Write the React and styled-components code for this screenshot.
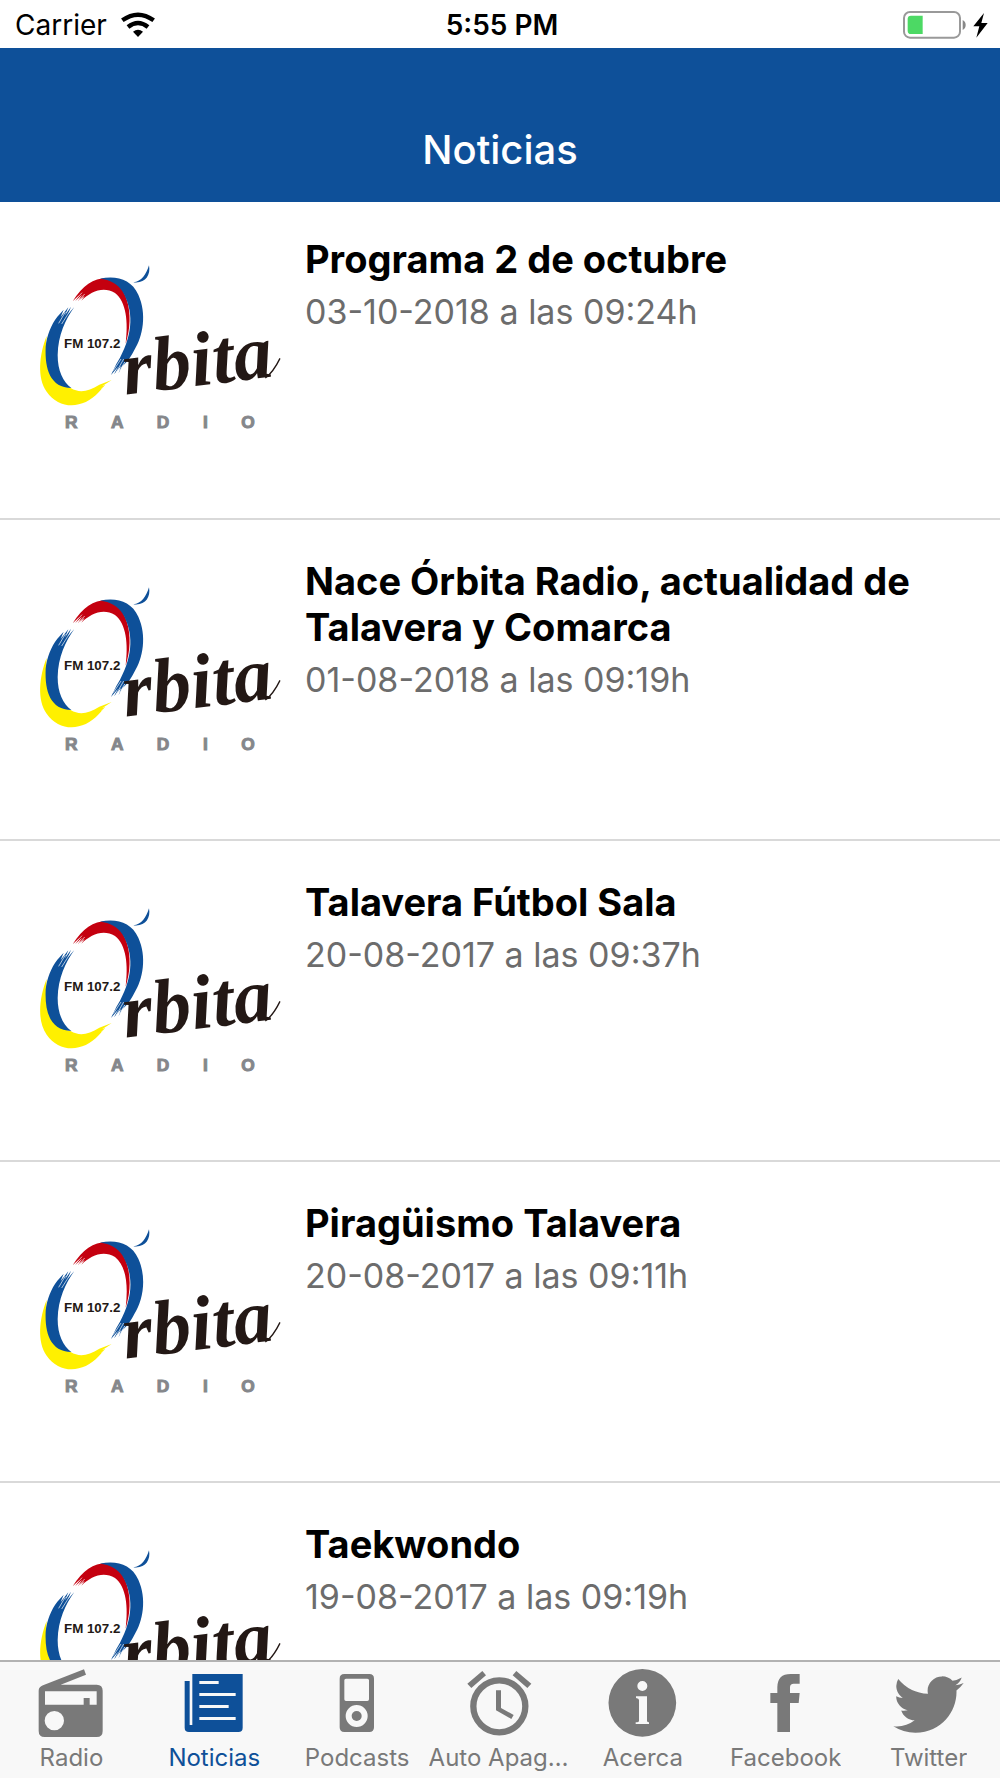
import React from 'react'
import styled, { createGlobalStyle } from 'styled-components'
import { IoLogoTwitter } from 'react-icons/io5'

const news = [
  { id: 1, title: 'Programa 2 de octubre', date: '03-10-2018 a las 09:24h' },
  { id: 2, title: 'Nace Órbita Radio, actualidad de Talavera y Comarca', date: '01-08-2018 a las 09:19h' },
  { id: 3, title: 'Talavera Fútbol Sala', date: '20-08-2017 a las 09:37h' },
  { id: 4, title: 'Piragüismo Talavera', date: '20-08-2017 a las 09:11h' },
  { id: 5, title: 'Taekwondo', date: '19-08-2017 a las 09:19h' },
]

const RadioIcon = () => (
  <TabSvg viewBox="0 0 216 216">
    <path fillRule="evenodd" d="M24 52 147 4 153 20 77 50H185Q203 50 203 68V189Q203 207 185 207H29Q11 207 11 189V68Q11 57 24 52ZM30 70V110H146V90H164V110H185V70ZM58 129A29 29 0 1 0 58 187A29 29 0 1 0 58 129Z" />
  </TabSvg>
)

const NewsIcon = () => (
  <TabSvg viewBox="0 0 216 216">
    <path fillRule="evenodd" d="M43 18H194V179Q194 192 181 192H33Q20 192 20 179V39H35V171H43ZM64 39V48H122V39ZM64 75V84H173V75ZM64 111V120H152V111ZM64 147V156H173V147Z" />
  </TabSvg>
)

const PodcastIcon = () => (
  <TabSvg viewBox="0 0 216 216">
    <path fillRule="evenodd" d="M70 18H145Q159 18 159 32V178Q159 192 145 192H70Q56 192 56 178V32Q56 18 70 18ZM75 32Q70 32 70 37V94Q70 99 75 99H139Q144 99 144 94V37Q144 32 139 32ZM107 111A33 33 0 1 0 107 177A33 33 0 1 0 107 111Z" />
    <circle cx="107" cy="144" r="15" />
  </TabSvg>
)

const AlarmIcon = () => (
  <TabSvg viewBox="0 0 216 216">
    <circle cx="106" cy="115" r="78" fill="none" stroke="currentColor" strokeWidth="19" />
    <path d="M96 67H111V120L149 141 142 153 96 127ZM10 47 55 9 66 22 22 60ZM157 9 202 47 190 60 146 22Z" />
  </TabSvg>
)

const InfoIcon = () => (
  <TabSvg viewBox="0 0 216 216">
    <path fillRule="evenodd" d="M106 3A101 101 0 1 0 106 206A101 101 0 1 0 106 3ZM106 39A15 15 0 1 1 106 69A15 15 0 1 1 106 39ZM87 85H120V158Q120 163 126 163V168H86V163Q96 163 96 158V96Q96 91 87 90Z" />
  </TabSvg>
)

const FacebookIcon = () => (
  <TabSvg viewBox="0 0 216 216">
    <path d="M82 192V105H61V75H82V58Q82 18 122 18H149V47H131Q120 47 120 58V75H149L146 105H120V192Z" />
  </TabSvg>
)

const tabs = [
  { id: 'radio', label: 'Radio', icon: <RadioIcon /> },
  { id: 'noticias', label: 'Noticias', icon: <NewsIcon /> },
  { id: 'podcasts', label: 'Podcasts', icon: <PodcastIcon /> },
  { id: 'apagado', label: 'Auto Apagado', icon: <AlarmIcon /> },
  { id: 'acerca', label: 'Acerca', icon: <InfoIcon /> },
  { id: 'facebook', label: 'Facebook', icon: <FacebookIcon /> },
  { id: 'twitter', label: 'Twitter', icon: <IoLogoTwitter size={75} /> },
]

const OrbitaLogo = () => (
  <Logo viewBox="0 0 810 600" role="img" aria-label="Órbita Radio FM 107.2">
    <path fill="#fff000" d="M80 258C57 315 51 385 80 425C118 480 190 478 236 427L256 405 246 409 275 390 238 404C205 425 178 430 152 414C102 408 73 355 80 258Z" />
    <path fill="#0e5099" d="M154 414C92 412 74 360 77 290C80 258 94 222 112 200L131 179 122 201 145 172 135 196 153 170 144 193 163 171C137 207 114 255 113 315C113 362 129 396 154 414Z" />
    <path fill="#c4000f" d="M158 154C188 106 220 85 260 84C318 95 347 190 317 281C325 216 319 155 285 129C250 108 213 124 184 152L194 137 174 153 186 134 166 153 178 135Z" />
    <path fill="#0e5099" d="M240 86C290 76 334 88 355 134C381 192 369 258 343 300C329 328 317 340 307 348L296 369 303 348 282 373 294 350 273 375 289 342 300 323C340 249 341 181 307 124C294 102 270 89 240 86Z" />
    <path fill="#0e5099" d="M387 46C393 77 374 102 340 97C365 94 378 75 387 46Z" />
    <g fill="none" stroke="#fff" strokeWidth="2">
      <path d="M116 220 136 186M125 222 149 184M280 362 303 327M289 366 311 327M298 364 315 335M166 150 186 128M176 151 194 132M244 417 268 398" />
    </g>
    <text x="132" y="295" fontSize="40" fontWeight="700" fill="#231815">FM 107.2</text>
    <Script x="316" y="434" transform="rotate(-7 316 434)">rbita</Script>
    <path d="M736 384Q760 366 780 325" fill="none" stroke="#231815" strokeWidth="4" />
    <text x="135 273 410 549 664" y="535" fontSize="52" fontWeight="700" fill="#85878b" stroke="#85878b" strokeWidth="3">RADIO</text>
  </Logo>
)

const StatusBar = () => (
  <StyledStatusBar>
    <Carrier>
      Carrier
      <svg width="34" height="26" viewBox="0 0 102 78" fill="none" stroke="#000">
        <path d="M4 25Q51-9 98 25" strokeWidth="13" />
        <path d="M21 45Q51 21 81 45" strokeWidth="13" />
        <path d="M36 59Q51 48 66 59L51 75Z" fill="#000" stroke="none" />
      </svg>
    </Carrier>
    <Clock>5:55 PM</Clock>
    <Battery>
      <svg width="86" height="28" viewBox="0 0 258 84">
        <rect x="3" y="3" width="168" height="77" rx="18" fill="none" stroke="#999" strokeWidth="6" />
        <path d="M24 14H59V69H24Q14 69 14 59V24Q14 14 24 14Z" fill="#4cd964" />
        <path d="M179 27Q188 32 188 42Q188 52 179 57Z" fill="#888" />
        <path d="M243 6 211 46H229L220 80 254 36H235Z" />
      </svg>
    </Battery>
  </StyledStatusBar>
)

const NewsItem = props => {
  const { title, date } = props
  return (
    <Item>
      <ItemLink href="#noticia">
        <OrbitaLogo />
        <ItemText>
          <ItemTitle>{title}</ItemTitle>
          <ItemDate>{date}</ItemDate>
        </ItemText>
      </ItemLink>
    </Item>
  )
}

export default function App() {
  return (
    <Screen>
      <GlobalStyle />
      <StatusBar />
      <Header>
        <HeaderTitle>Noticias</HeaderTitle>
      </Header>
      <NewsList>
        {news.map(item => <NewsItem key={item.id} {...item} />)}
      </NewsList>
      <TabBar>
        {tabs.map(tab => (
          <Tab key={tab.id} type="button" $active={tab.id === 'noticias'}>
            <TabIcon>{tab.icon}</TabIcon>
            <TabLabel>{tab.label}</TabLabel>
          </Tab>
        ))}
      </TabBar>
    </Screen>
  )
}

const GlobalStyle = createGlobalStyle`
  * {
    box-sizing: border-box;
  }
  body {
    margin: 0;
    background: #fff;
    color: #000;
    font-family: Inter, "Liberation Sans", sans-serif;
  }
`

const Screen = styled.div`
  display: flex;
  flex-direction: column;
  height: 100vh;
  overflow: hidden;
`

const StyledStatusBar = styled.div`
  display: grid;
  grid-template-columns: 1fr auto 1fr;
  align-items: center;
  flex: none;
  height: 48px;
  padding: 2px 11px 0 15px;
  font-size: 28px;
  line-height: 32px;
`

const Carrier = styled.div`
  display: flex;
  align-items: center;
  gap: 14px;
`

const Clock = styled.div`
  font-weight: 600;
`

const Battery = styled.div`
  display: flex;
  justify-content: flex-end;
`

const Header = styled.header`
  display: flex;
  align-items: flex-end;
  justify-content: center;
  flex: none;
  height: 154px;
  padding-bottom: 28px;
  background: #0e5099;
  color: #fff;
`

const HeaderTitle = styled.h1`
  margin: 0;
  font-size: 40px;
  font-weight: 500;
  line-height: 48px;
`

const NewsList = styled.ul`
  flex: 1;
  min-height: 0;
  margin: 0;
  padding: 0;
  overflow: hidden;
  list-style: none;
`

const Item = styled.li`
  height: 321px;
  border-bottom: 2px solid #d9d9d9;

  &:first-child {
    height: 318px;
  }
  &:first-child > a {
    padding-top: 34px;
  }
`

const ItemLink = styled.a`
  display: flex;
  align-items: flex-start;
  gap: 15px;
  padding: 38px 20px 0;
  color: inherit;
  text-decoration: none;
`

const Logo = styled.svg`
  flex: none;
  width: 270px;
  height: 200px;
  margin-top: 14px;
  font-family: "Liberation Sans", Arial, sans-serif;
`

const Script = styled.text`
  font-family: "Liberation Serif", "Times New Roman", serif;
  font-size: 232px;
  font-style: italic;
  font-weight: 700;
  fill: #231815;
`

const ItemText = styled.div`
  flex: 1;
  min-width: 0;
`

const ItemTitle = styled.h2`
  margin: 0;
  font-size: 38px;
  font-weight: 700;
  line-height: 46px;
`

const ItemDate = styled.p`
  margin: 9px 0 0;
  color: #6c6c6c;
  font-size: 34px;
  font-weight: 400;
  line-height: 42px;
`

const TabBar = styled.nav`
  display: flex;
  flex: none;
  height: 118px;
  border-top: 2px solid #b2b2b2;
  background: #f8f8f8;
`

const Tab = styled.button`
  display: flex;
  flex: 1;
  flex-direction: column;
  align-items: center;
  gap: 3px;
  min-width: 0;
  padding: 6px 0 0;
  border: 0;
  background: none;
  color: ${props => props.$active ? '#0e5099' : '#797979'};
  font-family: inherit;
`

const TabIcon = styled.span`
  display: flex;
  align-items: center;
  justify-content: center;
  height: 72px;
`

const TabSvg = styled.svg`
  width: 72px;
  height: 72px;
  fill: currentColor;
`

const TabLabel = styled.span`
  max-width: 100%;
  overflow: hidden;
  font-size: 24px;
  line-height: 30px;
  text-overflow: ellipsis;
  white-space: nowrap;
`
